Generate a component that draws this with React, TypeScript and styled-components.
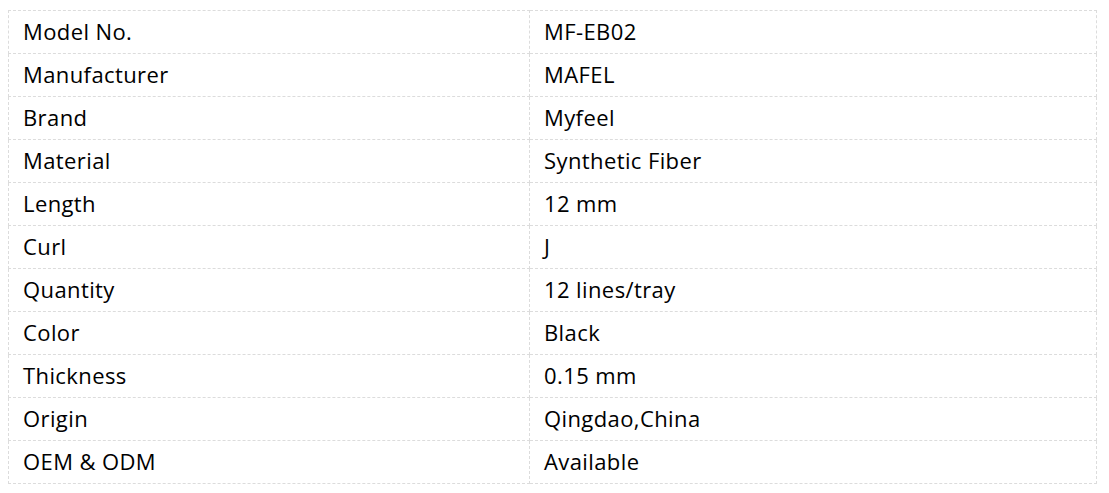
import { createGlobalStyle } from 'styled-components';
import { styled } from 'styled-components';

const GlobalStyle = createGlobalStyle`
  body {
    margin: 0;
    padding: 10px 8px;
    background: #ffffff;
    font-family: 'Open Sans', 'Noto Sans', sans-serif;
  }
`;

const SpecTable = styled.table`
  width: 1089px;
  border-collapse: collapse;
  border: 1px dashed #dcdcdc;
  color: #000000;
  font-size: 22px;
  letter-spacing: 0.4px;
`;

const Row = styled.tr`
  height: 43px;
`;

const Cell = styled.td<{ $label?: boolean }>`
  border: 1px dashed #dcdcdc;
  padding: 0 14px 2px;
  width: ${({ $label }) => ($label ? '492px' : 'auto')};
  vertical-align: middle;
  line-height: 1;
`;

const specs: [string, string][] = [
  ['Model No.', 'MF-EB02'],
  ['Manufacturer', 'MAFEL'],
  ['Brand', 'Myfeel'],
  ['Material', 'Synthetic Fiber'],
  ['Length', '12 mm'],
  ['Curl', 'J'],
  ['Quantity', '12 lines/tray'],
  ['Color', 'Black'],
  ['Thickness', '0.15 mm'],
  ['Origin', 'Qingdao,China'],
  ['OEM & ODM', 'Available'],
];

export default function App() {
  return (
    <>
      <GlobalStyle />
      <SpecTable>
        <tbody>
          {specs.map(([label, value]) => (
            <Row key={label}>
              <Cell $label>{label}</Cell>
              <Cell>{value}</Cell>
            </Row>
          ))}
        </tbody>
      </SpecTable>
    </>
  );
}
